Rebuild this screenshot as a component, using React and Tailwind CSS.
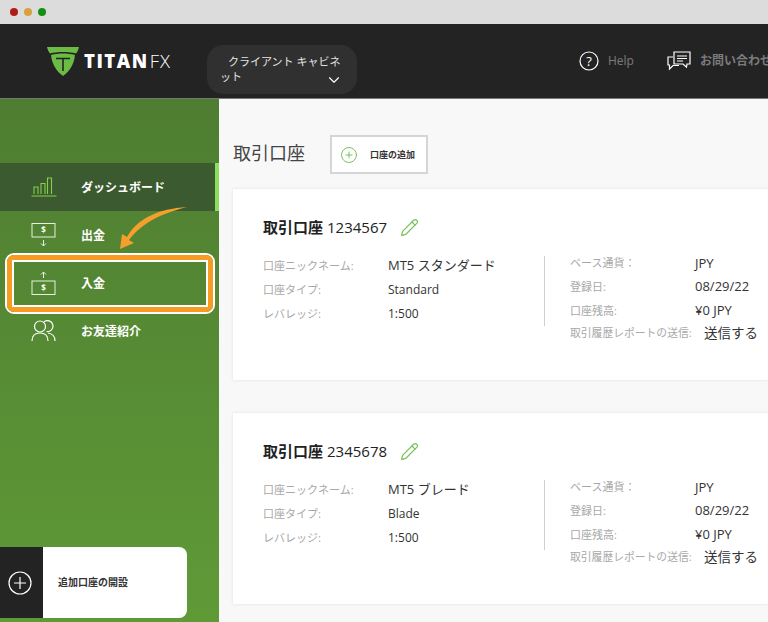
import { ChevronDown, CirclePlus, Pencil } from 'lucide-react'

const font = "font-['Open_Sans','Noto_Sans_CJK_JP',sans-serif]"

const Bars = () => (
  <svg width="26" height="20" viewBox="0 0 26 20" fill="none" stroke="#86cf49" strokeWidth="1.100">
    <path d="M0.500 19h25M3 17v-7h4v7M10 17V6.500h4V17M16.500 17V1h4v16" />
  </svg>
)

const Withdraw = () => (
  <svg width="26" height="24" viewBox="0 0 26 24" fill="none" stroke="#e8efe2" strokeWidth="1">
    <rect x="1" y="0.500" width="23" height="13.500" />
    <path d="M12.500 17v6M10 20.500l2.500 2.500 2.500-2.500" />
    <text x="12.500" y="10" fontSize="8" fill="#fff" stroke="none" textAnchor="middle" fontWeight="700">$</text>
  </svg>
)

const Deposit = () => (
  <svg width="26" height="24" viewBox="0 0 26 24" fill="none" stroke="#e8efe2" strokeWidth="1">
    <rect x="1" y="10" width="23" height="13.500" />
    <path d="M12.500 7V1M10 3.500L12.500 1 15 3.500" />
    <text x="12.500" y="20" fontSize="8" fill="#fff" stroke="none" textAnchor="middle" fontWeight="700">$</text>
  </svg>
)

const Friends = () => (
  <svg width="25" height="22" viewBox="0 0 25 22" fill="none" stroke="#fff" strokeWidth="1.200">
    <circle cx="9" cy="6.500" r="5.500" />
    <path d="M1 21c0-5 3-8 8-8s8 3 8 8" />
    <path d="M13 1.800a5.500 5.500 0 1 1 2.500 9.700M17 13c4 .5 7 3.500 7 8" />
  </svg>
)

const Chat = () => (
  <svg width="24" height="20" viewBox="0 0 24 20" fill="none" stroke="#fff" strokeWidth="1.200">
    <path d="M7 1h16v12h-3l-.5 3-3.500-3H7z" />
    <path d="M6 6H1v8h1.500v4l3.500-3.500h6" />
    <path d="M10 5h10M10 7.500h10M10 10h6" />
  </svg>
)

const menu = [
  { label: 'ダッシュボード', icon: <Bars />, active: true },
  { label: '出金', icon: <Withdraw /> },
  { label: '入金', icon: <Deposit /> },
  { label: 'お友達紹介', icon: <Friends /> },
]

const Row = ({ label, value, cls = 'text-[12px]', h = 'h-[24px]' }) => (
  <div className={`flex items-center ${h}`}>
    <span className="w-[125px] shrink-0 text-[11px] text-[#a8a8a8]">{label}</span>
    <span className={`${cls} text-[#333]`}>{value}</span>
  </div>
)

function AccountCard({ number, nickname, type }) {
  return (
    <div className="bg-white h-[191px] pl-[30px] pt-[26px] shadow-[0_0_3px_rgba(0,0,0,0.1)]">
      <div className="flex items-center h-[24px]">
        <span className="text-[15px] font-bold text-[#222]">取引口座</span>
        <span className="text-[15px] text-[#222] ml-1 font-medium">{number}</span>
        <Pencil size={19} strokeWidth={1.5} className="ml-[13px] text-[#7cc05a]" />
      </div>
      <div className="flex mt-[14px]">
        <div className="w-[281px] pt-[1px]">
          <Row label="口座ニックネーム:" value={nickname} cls="text-[13px]" />
          <Row label="口座タイプ:" value={type} />
          <Row label="レバレッジ:" value="1:500" />
        </div>
        <div className="flex flex-col mt-[3px]">
          <div className="border-l border-[#cfcfcf] h-[70px] pl-[25px]">
            <div className="-mt-[4px]">
              <Row label="ベース通貨：" value="JPY" cls="text-[13px]" h="h-[23px]" />
              <Row label="登録日:" value="08/29/22" cls="text-[13px]" />
              <Row label="口座残高:" value="¥0 JPY" cls="text-[13px]" />
            </div>
          </div>
          <div className="flex items-center h-[24px] pl-[26px] -mt-[5px]">
            <span className="w-[134px] text-[10.800px] text-[#a8a8a8] whitespace-nowrap">取引履歴レポートの送信:</span>
            <span className="text-[13.500px] text-[#333] whitespace-nowrap">送信する</span>
          </div>
        </div>
      </div>
    </div>
  )
}

export default function App() {
  return (
    <div className={`${font} relative w-[768px] h-[622px] overflow-hidden bg-[#f8f8f8] flex flex-col`}>
      <div className="h-[24px] bg-[#dcdcdc] flex items-center gap-[6px] pl-[10px] shrink-0 pb-[1px]">
        <span className="w-[8px] h-[8px] rounded-full bg-[#b01c1c]" />
        <span className="w-[8px] h-[8px] rounded-full bg-[#d9a040]" />
        <span className="w-[8px] h-[8px] rounded-full bg-[#129012]" />
      </div>

      <header className="h-[75px] bg-[#232323] flex items-center shrink-0 pl-[47px] border-b border-[#777] whitespace-nowrap">
        <svg width="33" height="29" viewBox="0 0 33 29" className="shrink-0">
          <path d="M0 0h32c-.5 2.500-1.500 4.500-3 6.500C22 4.500 10 4.500 3 6.500 1.500 4.500 .5 2.500 0 0z" fill="#6bbb45" />
          <path d="M4 8c7-2 17-2 24 0-1 9-5 16-12 21C9 24 5 17 4 8z" fill="#6bbb45" />
          <path d="M9 11.500h14M16 11.500V24" fill="none" stroke="#232323" strokeWidth="1.600" />
        </svg>
        <span className="ml-[4px] w-[90px] shrink-0 text-[18.500px] leading-none font-extrabold text-white tracking-[1.500px] font-['Open_Sans',sans-serif]">TITAN<span className="font-light tracking-[1px] ml-[1px]">FX</span></span>
        <div className="relative ml-[33px] mt-[16px] w-[150px] h-[49px] rounded-[16px] bg-[#303030] text-[11px] text-[#e4e4e4] leading-[15px] pl-[13px] pt-[9px] whitespace-normal shrink-0">
          <span className="pl-[8px]">クライアント キャビネ<br />ット</span>
          <ChevronDown size={18} strokeWidth={1.5} className="absolute right-[14px] bottom-[5px] text-white" />
        </div>
        <svg width="20" height="20" viewBox="0 0 20 20" fill="none" stroke="#fff" strokeWidth="1.200" className="ml-[222px] shrink-0">
          <circle cx="10" cy="10" r="9" />
          <text x="10" y="14.500" fontSize="13" fill="#fff" stroke="none" textAnchor="middle">?</text>
        </svg>
        <span className="ml-[9px] text-[12px] text-[#7c7c7c] font-medium">Help</span>
        <span className="ml-[33px] shrink-0"><Chat /></span>
        <span className="ml-[9px] text-[12px] text-[#7c7c7c] font-semibold">お問い合わせ</span>
      </header>

      <div className="flex flex-1 min-h-0">
        <aside className="relative w-[219px] shrink-0 bg-gradient-to-b from-[#4e7d31] to-[#5f9a37] pt-[64px]">
          {menu.map(m => (
            <div key={m.label} className={`flex items-center h-[48px] ${m.active ? 'bg-[#3c5a2f] border-r-[4px] border-[#8ae05a]' : ''}`}>
              <div className="w-[81px] pl-[31px] flex shrink-0">{m.icon}</div>
              <span className="text-[12px] font-bold text-white pt-[2px]">{m.label}</span>
            </div>
          ))}
          <div className="absolute left-0 bottom-[4px] w-[187px] h-[71px] flex rounded-r-[8px] overflow-hidden bg-white">
            <div className="w-[43px] bg-[#232323] flex items-center justify-center pr-[3px]">
              <svg width="24" height="24" viewBox="0 0 24 24" fill="none" stroke="#fff" strokeWidth="1.200">
                <circle cx="12" cy="12" r="11" />
                <path d="M12 6v12M6 12h12" />
              </svg>
            </div>
            <div className="flex items-center pl-[15px] text-[10px] font-bold text-[#333]">追加口座の開設</div>
          </div>
          {/* annotation over the menu */}
          <div className="absolute left-[5px] top-[154px] w-[210px] h-[61px] rounded-[9px] border-[2px] border-white">
            <div className="w-full h-full rounded-[7px] border-[5px] border-[#f79b22]">
              <div className="w-full h-full border-[2px] border-white" />
            </div>
          </div>
          <svg width="72" height="44" viewBox="0 0 72 44" className="absolute left-[118px] top-[107px]">
            <path d="M69 1C40 3 20 12 9 31l-5-3-2 15 14-6-5-3C24 17 42 8 69 1z" fill="#f5a02c" />
          </svg>
        </aside>

        <main className="flex-1 min-w-0 pl-[14px] pt-[36px]">
          <div className="flex items-center h-[39px] mb-[15px]">
            <h1 className="text-[18px] text-[#444] w-[97px] font-normal pb-[2px]">取引口座</h1>
            <div className="w-[98px] h-[39px] bg-white border-[2px] border-[#d5d5d5] flex items-center pl-[8px] shrink-0">
              <CirclePlus size={18} strokeWidth={1.2} className="text-[#6fbb4a]" />
              <span className="ml-[12px] text-[9px] font-bold text-[#333]">口座の追加</span>
            </div>
          </div>
          <AccountCard number="1234567" nickname="MT5 スタンダード" type="Standard" />
          <div className="h-[33px]" />
          <AccountCard number="2345678" nickname="MT5 ブレード" type="Blade" />
        </main>
      </div>
    </div>
  )
}
